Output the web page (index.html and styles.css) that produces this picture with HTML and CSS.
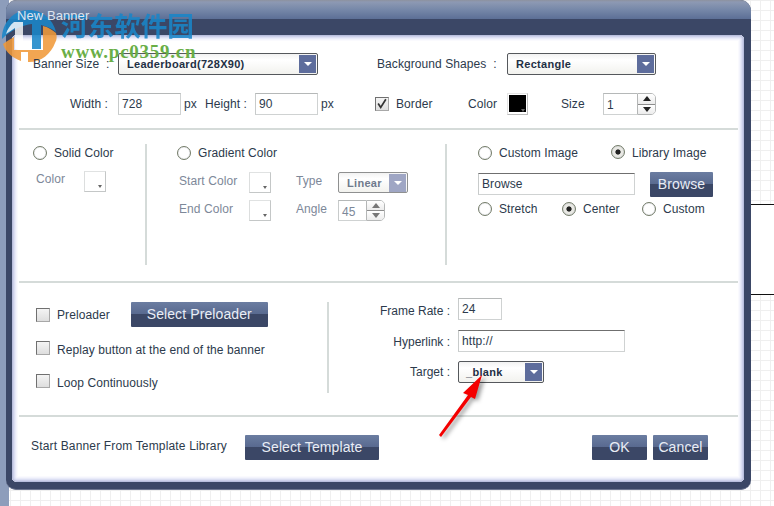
FILE: index.html
```html
<!DOCTYPE html>
<html lang="en">
<head>
<meta charset="utf-8">
<title>New Banner</title>
<link rel="stylesheet" href="styles.css">
</head>
<body>
<div class="desktop">
  <div class="side-strip"></div>
  <div class="canvas-band"></div>

  <section class="dialog">
    <header class="titlebar"><span class="title-text">New Banner</span></header>
    <div class="panel">

      <div class="section sec-top">
        <div class="row-size">
          <span class="label over-mark">Banner Size &nbsp;:</span>
          <div class="select"><span class="select-text">Leaderboard(728X90)</span><span class="select-btn"></span></div>
          <span class="label">Background Shapes &nbsp;:</span>
          <div class="select select-tight"><span class="select-text">Rectangle</span><span class="select-btn"></span></div>
        </div>
        <div class="row-dims">
          <span class="label right">Width :</span>
          <div class="field">728</div>
          <span class="label unit">px</span>
          <span class="label">Height :</span>
          <div class="field">90</div>
          <span class="label unit">px</span>
          <span class="check checked"><svg viewBox="0 0 14 14" width="12" height="12"><path d="M2.5 6.500 5.500 11 11.500 1.500" fill="none" stroke="#333" stroke-width="2"/></svg></span>
          <span class="label">Border</span>
          <span class="label">Color</span>
          <span class="swatch swatch-black"></span>
          <span class="label">Size</span>
          <div class="stepper"><div class="field stepper-field">1</div><div class="stepper-btns"><span class="step up"></span><span class="step down"></span></div></div>
        </div>
      </div>

      <div class="section sec-fill">
        <div class="col col-solid">
          <div class="option"><span class="radio"></span><span class="label">Solid Color</span></div>
          <div class="solid-row">
            <span class="label muted">Color</span>
            <span class="swatch"></span>
          </div>
        </div>
        <div class="col col-gradient">
          <div class="option"><span class="radio"></span><span class="label">Gradient Color</span></div>
          <div class="gradient-grid">
            <span class="label muted">Start Color</span>
            <span class="swatch"></span>
            <span class="label muted">Type</span>
            <div class="select select-off"><span class="select-text">Linear</span><span class="select-btn"></span></div>
            <span class="label muted">End Color</span>
            <span class="swatch"></span>
            <span class="label muted">Angle</span>
            <div class="stepper stepper-off"><div class="field stepper-field">45</div><div class="stepper-btns"><span class="step up"></span><span class="step down"></span></div></div>
          </div>
        </div>
        <div class="col col-image">
          <div class="image-kind">
            <div class="option"><span class="radio"></span><span class="label">Custom Image</span></div>
            <div class="option"><span class="radio on"></span><span class="label">Library Image</span></div>
          </div>
          <div class="browse-row">
            <div class="field field-dark">Browse</div>
            <button class="btn btn-browse">Browse</button>
          </div>
          <div class="image-fit">
            <div class="option"><span class="radio"></span><span class="label">Stretch</span></div>
            <div class="option"><span class="radio on"></span><span class="label">Center</span></div>
            <div class="option"><span class="radio"></span><span class="label">Custom</span></div>
          </div>
        </div>
      </div>

      <div class="section sec-options">
        <div class="opts-left">
          <div class="opt-row"><span class="check"></span><span class="label">Preloader</span><button class="btn btn-preloader">Select Preloader</button></div>
          <div class="opt-row"><span class="check"></span><span class="label">Replay button at the end of the banner</span></div>
          <div class="opt-row"><span class="check"></span><span class="label">Loop Continuously</span></div>
        </div>
        <div class="opts-right">
          <span class="label right rate-label">Frame Rate :</span>
          <div class="field field-rate">24</div>
          <span class="label right link-label">Hyperlink :</span>
          <div class="field field-dark field-link">http://</div>
          <span class="label right">Target :</span>
          <div class="select select-target"><span class="select-text">_blank</span><span class="select-btn"></span></div>
        </div>
      </div>

      <div class="sec-actions">
        <span class="label template-label">Start Banner From Template Library</span>
        <button class="btn btn-template">Select Template</button>
        <button class="btn btn-ok">OK</button>
        <button class="btn btn-cancel">Cancel</button>
      </div>

    </div>
  </section>

  <div class="watermark">
    <svg class="wm-logo" viewBox="0 0 56 54" width="56" height="54">
      <path d="M1 30C1 13 13 1 28 1c13 0 24 9 27 22-5-4-10-6-15-7v24H31V15c-9 1-21 6-30 15Z" fill="#1a86c8" opacity=".88"/>
      <path d="M13 13C9 16 6 21 5 25l9-6v21h8V13Z" fill="#fff" opacity=".8"/>
      <path d="M2 35c3-2 7-5 11-7v13h29V17c5 1 9 4 13 7 1 3 1 7-1 10-4 11-14 19-26 19h-1V43h-7v9C12 49 5 44 2 35Z" fill="#f09a3a" opacity=".88"/>
    </svg>
    <div class="wm-text">
      <div class="wm-cn">河东软件园</div>
      <div class="wm-url">www.pc0359.cn</div>
    </div>
  </div>

  <svg class="arrow" viewBox="0 0 60 80" width="60" height="80">
    <path d="M1 62 30 22 25 20 44 2 37 26 33 24 3 64Z" fill="#f40000"/>
  </svg>
</div>
</body>
</html>
```
FILE: styles.css
```css
* { box-sizing: border-box; }
html, body { margin: 0; padding: 0; }
body {
  width: 774px;
  height: 506px;
  overflow: hidden;
  font-family: "Liberation Sans", Arial, sans-serif;
  font-size: 12px;
  letter-spacing: .08px;
  color: #2c3a4c;
}
.desktop {
  position: relative;
  width: 774px;
  height: 506px;
  overflow: hidden;
  background-color: #fff;
  background-image:
    linear-gradient(to right, #efefef 1px, transparent 1px),
    linear-gradient(to bottom, #efefef 1px, transparent 1px);
  background-size: 10px 10px;
}
.side-strip {
  position: absolute;
  left: 0; top: 0;
  width: 9px; height: 506px;
  background: #8d9dbb;
}
.canvas-band {
  position: absolute;
  left: 745px; top: 204px;
  width: 29px; height: 91px;
  background: #fff;
  border-top: 1px solid #111;
  border-bottom: 1px solid #111;
}

/* dialog window */
.dialog {
  position: absolute;
  left: 6px; top: 0;
  width: 745px; height: 490px;
  display: flex;
  flex-direction: column;
  background: #3b4766;
  border-radius: 11px 11px 10px 10px;
  border-bottom: 1px solid #6d7690;
}
.titlebar {
  height: 35px;
  flex: none;
  padding: 8px 0 0 11px;
  font-size: 13px;
  line-height: 15px;
  color: #dfe5f0;
  border-radius: 11px 11px 0 0;
  background: linear-gradient(to bottom, #8d929e 0, #8d99b3 2px, #7587a8 10px, #5c6f96 19px, #3b4766 19px, #3b4766 100%);
}
.title-text, .over-mark { position: relative; z-index: 2; }
.panel {
  flex: none;
  width: 732px;
  height: 447px;
  margin-left: 6px;
  padding: 0 6px 0 7px;
  background: #fff;
  border-radius: 5px;
  box-shadow:
    inset 0 0 0 1px #b9bfdd,
    inset 0 0 0 2px #ccd0ea,
    inset 0 0 0 3px #dcdff3,
    inset 0 0 0 4px #e9ebf9,
    inset 0 0 0 5px #f3f4fc,
    inset 0 0 0 6px #fafafe;
}
.section { border-bottom: 2px solid #d5dbd9; }

/* shared text */
.label { white-space: nowrap; line-height: 14px; }
.right { text-align: right; }
.muted { color: #7d8899; }

/* fields */
.field {
  height: 22px;
  padding: 0 3px;
  line-height: 21px;
  font-size: 12px;
  background: #fff;
  border: 1px solid #cfd2d2;
  border-top-color: #b5b8b8;
  border-left-color: #c8cbcb;
}
.field-dark { border-top-color: #6f6f6f; }

/* dropdown */
.select {
  height: 22px;
  display: flex;
  align-items: center;
  justify-content: space-between;
  padding: 0 1px 0 8px;
  background: linear-gradient(to bottom, #f2f2f2 0, #fff 30%, #f2f2ee 100%);
  border: 1px solid #55585c;
  border-radius: 2px;
}
.select-text {
  font-size: 11px;
  font-weight: 700;
  letter-spacing: .3px;
  color: #1f3045;
}
.select-btn {
  width: 17px; height: 18px;
  display: flex;
  align-items: center;
  justify-content: center;
  background: #5e6d9c;
  flex: none;
}
.select-btn::after {
  content: "";
  border-left: 4px solid transparent;
  border-right: 4px solid transparent;
  border-top: 4px solid #fff;
}
.select-off { border-color: #8f9090; }
.select-off .select-text { color: #6f7a8c; }
.select-off .select-btn { background: #9fa6c4; }
.select-target { padding-left: 7px; }

/* colour swatches */
.swatch {
  width: 22px; height: 21px;
  display: flex;
  align-items: flex-end;
  justify-content: flex-end;
  padding: 0 3px 3px 0;
  background: #fff;
  border: 1px solid #c4c7c7;
  border-top-color: #e0e2e2;
  border-left-color: #dcdede;
}
.swatch::after {
  content: "";
  border-left: 2px solid transparent;
  border-right: 2px solid transparent;
  border-top: 3px solid #666;
}
.swatch-black {
  width: 21px;
  height: 22px;
  padding: 0 2px 2px 0;
  background: linear-gradient(#000, #000) 1px 1px / 17px 17px no-repeat #fff;
  border-color: #e5e5e5 #bcbcbc #bcbcbc #e5e5e5;
}

/* number stepper */
.stepper { display: flex; height: 22px; }
.stepper-field { flex: 1; border-right: 0; padding-top: 1px; }
.stepper-btns {
  width: 19px;
  display: flex;
  flex-direction: column;
  border: 1px solid #b4b6b6;
  border-radius: 0 5px 5px 0;
  overflow: hidden;
}
.step {
  flex: 1;
  display: flex;
  align-items: center;
  justify-content: center;
  background: linear-gradient(#fff, #ececec);
}
.step.down { border-top: 1px solid #8d8d8d; }
.step::after {
  content: "";
  border-left: 4px solid transparent;
  border-right: 4px solid transparent;
}
.step.up::after { border-bottom: 5px solid #222; }
.step.down::after { border-top: 5px solid #222; }
.stepper-off { height: 21px; width: 47px; }
.stepper-off .stepper-field { color: #7d8899; height: 21px; }
.stepper-off .stepper-btns { width: 19px; flex: none; }
.stepper-off .step.up::after { border-bottom-color: #777; }
.stepper-off .step.down::after { border-top-color: #777; }

/* radio & checkbox */
.radio {
  width: 14px; height: 14px;
  flex: none;
  border-radius: 50%;
  border: 1px solid #737c68;
  background: #fff;
  box-shadow: inset 0 0 1px #aab;
}
.radio.on {
  background: radial-gradient(circle, #222 0, #222 2.2px, #e9e9e4 3px, #e9e9e4 100%);
}
.option { display: flex; align-items: center; gap: 7px; }
.check {
  width: 14px; height: 14px;
  flex: none;
  display: flex;
  align-items: center;
  justify-content: center;
  background: linear-gradient(#f4f4f4, #dedede);
  border: 1px solid #a8a8a8;
  border-top-color: #707070;
  border-left-color: #707070;
}

/* buttons */
.btn {
  height: 25px;
  padding: 0 0 2px;
  border: 0;
  border-radius: 1px;
  font-family: "Liberation Sans", Arial, sans-serif;
  font-size: 14px;
  letter-spacing: .1px;
  color: #e9edf5;
  background: linear-gradient(to bottom, #6b7da1 0, #58698f 50%, #3b4766 50%, #3b4766 100%);
}

/* top section */
.sec-top { height: 95px; padding: 18px 0 0 14px; }
.row-size {
  display: grid;
  grid-template-columns: 85px 200px 59px 130px 149px;
  align-items: center;
}
.row-size > .label:nth-child(3) { grid-column: 4; }
.row-size > .select:nth-child(4) { grid-column: 5; }
.row-dims {
  display: grid;
  grid-template-columns: 85px 63px 24px 50px 63px 57px 21px 72px 39px 54px 42px 53px;
  align-items: center;
  margin-top: 18px;
}
.row-dims > .label { padding-bottom: 1px; }
.row-dims > .right { padding-right: 10px; }
.unit { padding-left: 3px; }

/* fill section */
.sec-fill {
  height: 153px;
  display: flex;
  align-items: flex-start;
  padding: 14px 0 0 14px;
}
.col { height: 121px; }
.col-solid { width: 114px; border-right: 2px solid #d5dbd9; }
.col-gradient { width: 300px; padding-left: 30px; border-right: 2px solid #d5dbd9; }
.col-image { padding-left: 31px; }
.col .option:first-child { margin-top: 1px; }
.col-image .label { padding-top: 1px; }
.col-solid .option .label, .col-gradient .option .label { padding-top: 1px; }
.solid-row {
  display: grid;
  grid-template-columns: 48px 22px;
  align-items: center;
  margin: 11px 0 0 3px;
}
.solid-row .label { padding-bottom: 5px; }
.gradient-grid {
  display: grid;
  grid-template-columns: 70px 47px 42px 70px;
  grid-auto-rows: 21px;
  row-gap: 7px;
  align-items: center;
  margin: 12px 0 0 2px;
}
.gradient-grid .select, .gradient-grid .field { height: 21px; }
.gradient-grid .label { padding-bottom: 4px; }
.image-kind {
  display: grid;
  grid-template-columns: 133px auto;
}
.browse-row {
  display: grid;
  grid-template-columns: 157px 63px;
  column-gap: 15px;
  margin-top: 12px;
}
.browse-row .field { margin-top: 1px; }
.image-fit {
  display: grid;
  grid-template-columns: 84px 80px auto;
  margin-top: 5px;
}
.col-image .image-fit .label { padding-top: 0; }
.image-fit .option:first-child { margin-top: 0; }

/* options section */
.sec-options {
  height: 134px;
  display: flex;
  align-items: flex-start;
  padding: 15px 0 0 17px;
}
.opts-left {
  width: 293px;
  height: 91px;
  margin-top: 4px;
  display: grid;
  grid-template-rows: 39px 33px 19px;
  border-right: 2px solid #d5dbd9;
}
.opt-row {
  display: flex;
  align-items: flex-start;
  gap: 7px;
}
.opt-row:first-child { align-items: center; height: 25px; }
.opt-row .label { line-height: 16px; padding-top: 1px; }
.opts-right {
  display: grid;
  grid-template-columns: 121px auto;
  grid-template-rows: 32px 31px 22px;
  column-gap: 8px;
  align-items: start;
}
.opts-right .label { line-height: 22px; letter-spacing: 0; }
.rate-label { padding-top: 2px; }
.link-label { padding-top: 1px; }
.field-rate { width: 44px; }
.field-link { width: 167px; }
.select-target { width: 86px; }
.btn-preloader { width: 137px; margin-left: 14px; }

/* actions */
.sec-actions {
  display: flex;
  align-items: center;
  margin-top: 18px;
  padding: 0 30px 0 12px;
  height: 25px;
}
.template-label { width: 214px; padding-bottom: 4px; letter-spacing: .16px; }
.btn-template { width: 134px; }
.btn-ok { width: 55px; margin-left: auto; }
.btn-cancel { width: 55px; margin-left: 6px; }

/* overlays */
.watermark {
  position: absolute;
  z-index: 1;
  left: 0; top: 9px;
  display: flex;
  pointer-events: none;
}
.wm-logo { flex: none; margin-left: 1px; }
.wm-text { margin: 1px 0 0 4px; }
.wm-cn {
  font-family: "Noto Sans CJK SC", sans-serif;
  font-weight: 700;
  font-size: 26.6px;
  line-height: 30px;
  letter-spacing: 0;
  color: #1a86c8;
  opacity: .88;
}
.wm-url {
  font-family: "Liberation Serif", serif;
  font-weight: 700;
  font-size: 19px;
  line-height: 18px;
  margin-top: 3px;
  letter-spacing: .75px;
  color: #69ae46;
  white-space: nowrap;
}
.arrow {
  position: absolute;
  z-index: 1;
  left: 438px; top: 373px;
  pointer-events: none;
  filter: drop-shadow(3px 2px 2px rgba(0, 0, 0, .4));
}
```
